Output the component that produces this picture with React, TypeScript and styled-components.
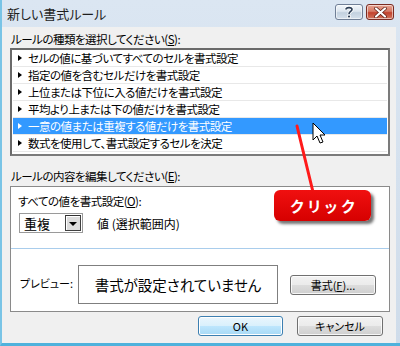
import styled, { createGlobalStyle } from 'styled-components';

const GlobalStyle = createGlobalStyle`
  html, body {
    margin: 0;
    padding: 0;
    background: #ffffff;
  }
  body {
    font-family: "Noto Sans CJK JP", "Noto Sans", sans-serif;
    font-size: 11.5px;
    letter-spacing: -0.5px;
    font-feature-settings: "palt";
    color: #000;
  }
`;

const rules = [
    'セルの値に基づいてすべてのセルを書式設定',
    '指定の値を含むセルだけを書式設定',
    '上位または下位に入る値だけを書式設定',
    '平均より上または下の値だけを書式設定',
    '一意の値または重複する値だけを書式設定',
    '数式を使用して、書式設定するセルを決定',
];
const selectedIndex = 4;

const Window = styled.div`
  width: 400px;
  height: 346px;
  box-sizing: border-box;
  display: flex;
  flex-direction: column;
  background: linear-gradient(#dbe6f2, #cfdcea);
  border-left: 2px solid #79c4e6;
  border-bottom: 3px solid #4fb2dc;
  overflow: hidden;
`;

const TitleBar = styled.div`
  height: 27px;
  flex: none;
  display: flex;
  align-items: center;
  justify-content: space-between;
  padding: 0 6px 0 5px;
`;

const Title = styled.div`
  font-size: 13px;
  letter-spacing: 0;
  color: #1e1e1e;
  margin-top: -1px;
`;

const TitleButtons = styled.div`
  display: flex;
  gap: 3px;
  align-self: flex-start;
  margin-top: 4px;
`;

const CaptionButton = styled.div<{ $close?: boolean }>`
  width: 28px;
  height: 16px;
  box-sizing: border-box;
  border: 1px solid ${p => (p.$close ? '#7a2b22' : '#707f96')};
  border-radius: 3px;
  display: flex;
  align-items: center;
  justify-content: center;
  background: ${p =>
        p.$close
            ? 'linear-gradient(#e8a493 0%, #d57a66 45%, #c2412c 55%, #d0765e 100%)'
            : 'linear-gradient(#f2f6fa 0%, #dde6ef 45%, #c3d1df 55%, #d6e1ec 100%)'};
  box-shadow: inset 0 0 0 1px rgba(255, 255, 255, 0.55);
`;

const Client = styled.div`
  flex: 1;
  position: relative;
  background: #f0f0f0;
  margin-right: 4px;
  padding: 5px 7px 0 8px;
  display: flex;
  flex-direction: column;
`;

const Label = styled.div<{ $top?: number }>`
  height: 14px;
  line-height: 14px;
  margin-top: ${p => p.$top ?? 0}px;
  padding-left: 1px;
  white-space: nowrap;
`;

const ListBox = styled.div`
  margin-top: 2px;
  width: 380px;
  height: 108px;
  box-sizing: border-box;
  border: 2px solid #7b7b7b;
  border-top-color: #6a6a6a;
  border-left-color: #6a6a6a;
  background: #fff;
  padding: 0 1px;
`;

const Row = styled.div<{ $selected?: boolean }>`
  height: 17px;
  box-sizing: border-box;
  display: flex;
  align-items: center;
  gap: 6px;
  padding-left: 5px;
  border-bottom: 1px solid #e8e8e8;
  background: ${p => (p.$selected ? '#3399ff' : 'transparent')};
  color: ${p => (p.$selected ? '#fff' : '#000')};
  white-space: nowrap;
`;

const Arrow = styled.span<{ $selected?: boolean }>`
  width: 0;
  height: 0;
  border-top: 3.5px solid transparent;
  border-bottom: 3.5px solid transparent;
  border-left: 4px solid ${p => (p.$selected ? '#fff' : '#000')};
`;

const Panel = styled.div`
  margin-top: 3px;
  width: 380px;
  height: 126px;
  box-sizing: border-box;
  border: 1px solid #8a8a8a;
  background: #fff;
  display: flex;
  flex-direction: column;
`;

const PanelTop = styled.div`
  height: 62px;
  flex: none;
  box-sizing: border-box;
  border-bottom: 1px solid #a9cdec;
  padding: 7px 0 0 6px;
`;

const ValueRow = styled.div`
  display: flex;
  align-items: center;
  margin-top: 5px;
  margin-left: 2px;
  gap: 14px;
`;

const Combo = styled.div`
  width: 64px;
  height: 20px;
  box-sizing: border-box;
  border: 1px solid #9a9a9a;
  display: flex;
  align-items: center;
  justify-content: space-between;
  padding: 0 1px 0 4px;
  font-size: 13px;
  letter-spacing: 0;
`;

const ComboButton = styled.div`
  width: 16px;
  height: 16px;
  box-sizing: border-box;
  border: 1px solid #404040;
  border-top-color: #303030;
  background: #dcdcdc;
  box-shadow: inset 1px 1px 0 #fff;
  display: flex;
  align-items: center;
  justify-content: center;
  &::after {
    content: '';
    width: 0;
    height: 0;
    margin-top: 2px;
    border-left: 4px solid transparent;
    border-right: 4px solid transparent;
    border-top: 4px solid #000;
  }
`;

const ValueText = styled.span`
  font-size: 12px;
  letter-spacing: 0;
`;

const PreviewRow = styled.div`
  flex: 1;
  display: flex;
  align-items: center;
  padding-left: 9px;
`;

const PreviewLabel = styled.span`
  width: 58px;
  font-size: 11px;
  letter-spacing: 0;
  margin-top: 6px;
`;

const PreviewBox = styled.div`
  width: 200px;
  height: 39px;
  box-sizing: border-box;
  border: 1px solid #7f7f7f;
  display: flex;
  align-items: center;
  justify-content: center;
  font-size: 14.5px;
  letter-spacing: 0;
  margin-top: 9px;
`;

const Button = styled.div<{ $default?: boolean; $w: number }>`
  width: ${p => p.$w}px;
  height: 20px;
  box-sizing: border-box;
  border: 1px solid ${p => (p.$default ? '#3c7fb1' : '#707070')};
  border-radius: 3px;
  display: flex;
  align-items: center;
  justify-content: center;
  font-size: 11px;
  letter-spacing: 0;
  background: ${p =>
        p.$default
            ? 'linear-gradient(#eaf6fd 0%, #d9f0fc 50%, #bee6fd 50%, #a7d9f5 100%)'
            : 'linear-gradient(#f2f2f2 0%, #ebebeb 50%, #dddddd 50%, #cfcfcf 100%)'};
  box-shadow: inset 0 0 0 1px ${p => (p.$default ? '#ffffff' : 'rgba(255,255,255,0.8)')};
`;

const FormatButton = styled(Button)`
  margin-left: 12px;
  margin-top: 9px;
`;

const Footer = styled.div`
  display: flex;
  justify-content: flex-end;
  gap: 14px;
  margin-top: 4px;
  padding-right: 6px;
`;

const Callout = styled.div`
  position: absolute;
  left: 272px;
  top: 163px;
  width: 97px;
  height: 31px;
  border-radius: 6px;
  background: linear-gradient(#f01010, #d60000);
  box-shadow: 3px 3px 3px rgba(0, 0, 0, 0.55);
  color: #fff;
  font-weight: bold;
  font-size: 15px;
  letter-spacing: 4px;
  display: flex;
  align-items: center;
  justify-content: center;
  padding-left: 4px;
  box-sizing: border-box;
`;

const Overlay = styled.svg`
  position: absolute;
  left: 0;
  top: 0;
  pointer-events: none;
`;

export default function App() {
    return (
        <>
            <GlobalStyle />
            <Window>
                <TitleBar>
                    <Title>新しい書式ルール</Title>
                    <TitleButtons>
                        <CaptionButton>
                            <svg width="10" height="12" viewBox="0 0 10 12">
                                <path d="M2 3.5 C2 1 8 1 8 3.5 C8 5.5 5 5.5 5 8" fill="none" stroke="#fff" strokeWidth="3.2" />
                                <path d="M2 3.5 C2 1 8 1 8 3.5 C8 5.5 5 5.5 5 8" fill="none" stroke="#2d3e55" strokeWidth="1.6" />
                                <rect x="3.6" y="9.2" width="2.8" height="2.6" fill="#2d3e55" stroke="#fff" strokeWidth="0.8" />
                            </svg>
                        </CaptionButton>
                        <CaptionButton $close>
                            <svg width="13" height="11" viewBox="0 0 13 11">
                                <path d="M2 1.5 L11 9.5 M11 1.5 L2 9.5" stroke="#5a1a10" strokeWidth="3.6" strokeLinecap="round" />
                                <path d="M2 1.5 L11 9.5 M11 1.5 L2 9.5" stroke="#fff" strokeWidth="2.2" strokeLinecap="round" />
                            </svg>
                        </CaptionButton>
                    </TitleButtons>
                </TitleBar>
                <Client>
                    <Label>ルールの種類を選択してください(<u>S</u>):</Label>
                    <ListBox>
                        {rules.map((r, i) => (
                            <Row key={r} $selected={i === selectedIndex}>
                                <Arrow $selected={i === selectedIndex} />
                                {r}
                            </Row>
                        ))}
                    </ListBox>
                    <Label $top={13}>ルールの内容を編集してください(<u>E</u>):</Label>
                    <Panel>
                        <PanelTop>
                            <Label>すべての値を書式設定(<u>O</u>):</Label>
                            <ValueRow>
                                <Combo>
                                    重複
                                    <ComboButton />
                                </Combo>
                                <ValueText>値 (選択範囲内)</ValueText>
                            </ValueRow>
                        </PanelTop>
                        <PreviewRow>
                            <PreviewLabel>プレビュー:</PreviewLabel>
                            <PreviewBox>書式が設定されていません</PreviewBox>
                            <FormatButton $w={86}>書式(<u>F</u>)...</FormatButton>
                        </PreviewRow>
                    </Panel>
                    <Footer>
                        <Button $default $w={85}>OK</Button>
                        <Button $w={86}>キャンセル</Button>
                    </Footer>
                    <Overlay width="394" height="320" viewBox="0 0 394 320">
                        <line x1="295" y1="99" x2="311" y2="165" stroke="#ff1a1a" strokeWidth="3" strokeLinecap="round" />
                        <path
                            d="M311 96 L311 113 L315 109 L318 116 L321 115 L318 108 L323 108 Z"
                            fill="#fff"
                            stroke="#000"
                            strokeWidth="1"
                            strokeLinejoin="round"
                        />
                    </Overlay>
                    <Callout>クリック</Callout>
                </Client>
            </Window>
        </>
    );
}
